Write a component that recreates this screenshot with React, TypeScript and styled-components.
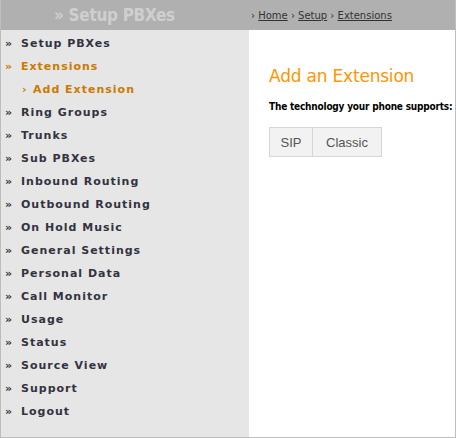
import React from "react";
import styled, { createGlobalStyle } from "styled-components";

const GlobalStyle = createGlobalStyle`
  html, body {
    margin: 0;
    padding: 0;
    background: #ffffff;
  }
`;

type MenuItem = {
  label: string;
  active?: boolean;
  sub?: boolean;
};

const menu: MenuItem[] = [
  { label: "Setup PBXes" },
  { label: "Extensions", active: true },
  { label: "Add Extension", active: true, sub: true },
  { label: "Ring Groups" },
  { label: "Trunks" },
  { label: "Sub PBXes" },
  { label: "Inbound Routing" },
  { label: "Outbound Routing" },
  { label: "On Hold Music" },
  { label: "General Settings" },
  { label: "Personal Data" },
  { label: "Call Monitor" },
  { label: "Usage" },
  { label: "Status" },
  { label: "Source View" },
  { label: "Support" },
  { label: "Logout" },
];

export default function App() {
  return (
    <>
      <GlobalStyle />
      <ScFrame>
        <ScHeader>
          <ScTitle>» Setup PBXes</ScTitle>
          <ScCrumbs>
            › <ScCrumbLink>Home</ScCrumbLink> › <ScCrumbLink>Setup</ScCrumbLink> ›{" "}
            <ScCrumbLink>Extensions</ScCrumbLink>
          </ScCrumbs>
        </ScHeader>
        <ScBody>
          <ScSidebar>
            {menu.map((item) => (
              <ScMenuRow key={item.label} $active={item.active} $sub={item.sub}>
                <ScBullet $sub={item.sub}>{item.sub ? "›" : "»"}</ScBullet>
                {item.label}
              </ScMenuRow>
            ))}
          </ScSidebar>
          <ScContent>
            <ScHeading>Add an Extension</ScHeading>
            <ScLabel>The technology your phone supports:</ScLabel>
            <ScButtonGroup>
              <ScButton $width={44}>SIP</ScButton>
              <ScButton $width={69}>Classic</ScButton>
            </ScButtonGroup>
          </ScContent>
        </ScBody>
      </ScFrame>
    </>
  );
}

const ScFrame = styled.div`
  width: 456px;
  height: 438px;
  box-sizing: border-box;
  border: 1px solid #bdbdbd;
  border-top: none;
  display: flex;
  flex-direction: column;
  overflow: hidden;
`;

const ScHeader = styled.div`
  height: 30px;
  background: #b0b0b0;
  display: flex;
  align-items: center;
  flex-shrink: 0;
`;

const ScTitle = styled.div`
  width: 248px;
  box-sizing: border-box;
  padding-left: 53px;
  color: #cfcfcf;
  font-family: "DejaVu Sans Condensed", "DejaVu Sans", Verdana, sans-serif;
  font-weight: bold;
  font-size: 17px;
  letter-spacing: -0.3px;
  white-space: nowrap;
`;

const ScCrumbs = styled.div`
  padding-left: 2px;
  font-family: "DejaVu Sans", Verdana, sans-serif;
  font-size: 10px;
  color: #333333;
  white-space: nowrap;
`;

const ScCrumbLink = styled.span`
  text-decoration: underline;
  color: #333333;
`;

const ScBody = styled.div`
  flex: 1;
  display: flex;
  min-height: 0;
`;

const ScSidebar = styled.div`
  width: 248px;
  flex-shrink: 0;
  background: #e6e6e6;
  padding-top: 2px;
  box-sizing: border-box;
`;

const ScMenuRow = styled.div<{ $active?: boolean; $sub?: boolean }>`
  height: 23px;
  display: flex;
  align-items: center;
  padding-left: ${(p) => (p.$sub ? "21px" : "4px")};
  font-family: "DejaVu Sans", Verdana, sans-serif;
  font-weight: bold;
  font-size: 11px;
  letter-spacing: 1px;
  color: ${(p) => (p.$active ? "#cc7a00" : "#333340")};
  white-space: nowrap;
`;

const ScBullet = styled.span<{ $sub?: boolean }>`
  display: inline-block;
  width: ${(p) => (p.$sub ? "11px" : "16px")};
  letter-spacing: 0;
`;

const ScContent = styled.div`
  flex: 1;
  background: #ffffff;
  padding: 36px 0 0 20px;
`;

const ScHeading = styled.div`
  font-family: "DejaVu Sans", Tahoma, sans-serif;
  font-size: 17px;
  color: #ff9500;
  letter-spacing: -0.2px;
  line-height: 21px;
`;

const ScLabel = styled.div`
  margin-top: 14px;
  font-family: "DejaVu Sans Condensed", "DejaVu Sans", Tahoma, sans-serif;
  font-weight: bold;
  font-size: 10px;
  color: #000000;
  white-space: nowrap;
  letter-spacing: -0.2px;
`;

const ScButtonGroup = styled.div`
  margin-top: 15px;
  display: flex;
`;

const ScButton = styled.div<{ $width: number }>`
  width: ${(p) => p.$width}px;
  height: 30px;
  box-sizing: border-box;
  display: flex;
  align-items: center;
  justify-content: center;
  background: #f2f2f2;
  border: 1px solid #d6d6d6;
  & + & {
    border-left: none;
  }
  font-family: "Liberation Sans", Arial, sans-serif;
  font-size: 13px;
  color: #555555;
`;
